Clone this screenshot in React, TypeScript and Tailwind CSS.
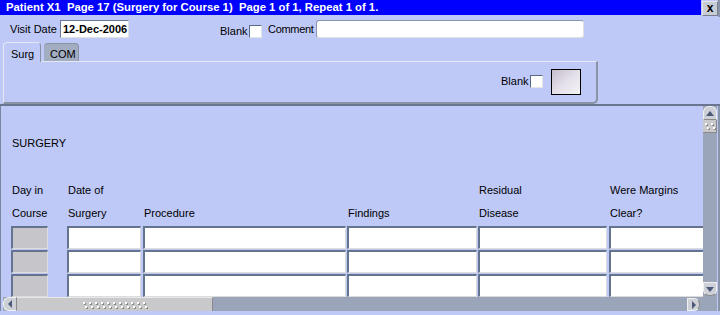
import React from 'react';

const COLS = [
  { w: 'w-[56px]', cell: 'w-[37px]', h1: 'Day in', h2: 'Course', gray: true },
  { w: 'w-[76px]', cell: 'w-[74px]', h1: 'Date of', h2: 'Surgery' },
  { w: 'w-[204px]', cell: 'w-[203px]', h1: '', h2: 'Procedure' },
  { w: 'w-[131px]', cell: 'w-[130px]', h1: '', h2: 'Findings' },
  { w: 'w-[131px]', cell: 'w-[129px]', h1: 'Residual', h2: 'Disease' },
  { w: 'w-[100px]', cell: 'w-[100px]', h1: 'Were Margins', h2: 'Clear?' },
];

function Check() {
  return <div className="w-[13px] h-[13px] bg-white border-t border-l border-[#5a6a82] border-r border-b border-r-[#e4e4e4] border-b-[#e4e4e4]" />;
}

function Dots({ cols, rows }: { cols: number; rows: number }) {
  return (
    <div className="flex flex-col gap-[2px]">
      {Array.from({ length: rows }).map((_, r) => (
        <div key={r} className={`flex gap-[4px] ${r % 2 ? 'pl-[2px]' : ''}`}>
          {Array.from({ length: cols }).map((_, c) => (
            <div key={c} className="w-[2px] h-[2px] bg-white shadow-[1px_1px_0_#8a8a8a]" />
          ))}
        </div>
      ))}
    </div>
  );
}

export default function App() {
  return (
    <div className="w-[720px] h-[315px] bg-[#bec9f7] font-['Liberation_Sans',Arial,sans-serif] text-[11px] text-black flex flex-col overflow-hidden">
      {/* Title bar */}
      <div className="h-[17px] flex">
        <div className="flex-1 bg-[#0000ff] h-[15px] text-white font-bold text-[11.3px] pl-[6px] leading-[15px] whitespace-pre">
          Patient X1  Page 17 (Surgery for Course 1)  Page 1 of 1, Repeat 1 of 1.
        </div>
        <div className="w-[16px] h-[15px] mt-[1px] ml-[1px] bg-[#c8ccd4] border border-[#e8e8e8] border-r-[#7a8090] border-b-[#7a8090] flex items-center justify-center font-bold text-[12px] leading-none pb-[2px]">
          x
        </div>
        <div className="w-[2px] bg-[#8a94a8]" />
      </div>

      {/* Top form */}
      <div className="h-[87px] flex flex-col pr-[3px]">
        <div className="flex items-center h-[18px] mt-[3px] whitespace-nowrap">
          <span className="ml-[10px] w-[50px]">Visit Date</span>
          <div className="w-[69px] h-[18px] bg-white border-t border-l border-[#6a7a92] border-r border-b border-r-[#e0e0e0] border-b-[#e0e0e0] font-bold pl-[2px] leading-[16px]">
            12-Dec-2006
          </div>
          <span className="ml-[91px] w-[29px] mt-[4px]">Blank</span>
          <div className="mt-[4px]"><Check /></div>
          <span className="ml-[6px] w-[48px] tracking-[-0.3px]">Comment</span>
          <div className="w-[268px] h-[18px] bg-white rounded-[3px] border border-[#8a96ac] border-r-[#e0e0e0] border-b-[#e0e0e0]" />
        </div>
        <div className="flex items-end h-[22px] ml-[3px] mt-[1px]">
          <div className="w-[38px] h-[20px] rounded-t-[4px] border-t border-l border-r border-[#e6e8f0] border-r-[#8890a4] pl-[7px] pt-[3px] relative z-10 bg-[#bec9f7] -mb-[1px]">
            Surg
          </div>
          <div className="w-[35px] h-[18px] ml-[3px] rounded-t-[4px] bg-[#a3adc2] border-t border-r border-[#8a92a6] pl-[6px] pt-[2px]">
            COM
          </div>
        </div>
        <div className="ml-[3px] w-[595px] h-[43px] border-t border-l border-[#e6e8f0] border-r-2 border-b-2 border-r-[#8a92a6] border-b-[#8a92a6] rounded-br-[5px] flex items-center justify-end pr-[15px]">
          <span className="mt-[-2px] w-[29px]">Blank</span>
          <div className="mt-[-2px]"><Check /></div>
          <div className="ml-[8px] w-[30px] h-[26px] border border-black bg-gradient-to-br from-[#c4bccc] via-[#e4e0ea] to-[#f4f4f4]" />
        </div>
      </div>

      {/* Lower panel */}
      <div className="flex-1 flex flex-col border-t-2 border-[#6a7690] min-h-0">
        <div className="flex flex-1 min-h-0">
          <div className="w-[3px] border-l border-[#7a86a0]" />
          <div className="flex-1 flex flex-col overflow-hidden">
            <div className="flex-1 flex flex-col min-h-0">
              <div className="pl-[9px] pt-[29px] h-[75px]">SURGERY</div>
              <div className="flex pl-[8px] h-[24px] items-center">
                {COLS.map((c, i) => (
                  <div key={i} className={`${c.w} shrink-0 pl-[1px] whitespace-nowrap`}>{c.h1}</div>
                ))}
              </div>
              <div className="flex pl-[8px] h-[24px] items-center">
                {COLS.map((c, i) => (
                  <div key={i} className={`${c.w} shrink-0 pl-[1px] whitespace-nowrap`}>{c.h2}</div>
                ))}
              </div>
              <div className="flex flex-col gap-[1px] pt-[1px]">
                {[0, 1, 2].map(r => (
                  <div key={r} className="flex pl-[8px] h-[23px]">
                    {COLS.map((c, i) => (
                      <div key={i} className={`${c.w} shrink-0`}>
                        <div className={`${c.cell} h-[23px] border-t-2 border-l-2 border-[#64748e] border-r border-b border-r-[#dcdcdc] border-b-[#dcdcdc] ${c.gray ? 'bg-[#c6c6ca]' : 'bg-white'}`} />
                      </div>
                    ))}
                  </div>
                ))}
              </div>
            </div>
            {/* Horizontal scrollbar */}
            <div className="h-[14px] flex bg-[#9aa5ba] shrink-0">
              <div className="w-[14px] h-[14px] bg-[#cdd0d6] rounded-l-[6px] border border-[#f0f0f0] border-r-[#8a8a8a] flex items-center justify-center">
                <div className="w-0 h-0 border-y-[4px] border-y-transparent border-r-[4px] border-r-[#4a5a78]" />
              </div>
              <div className="w-[196px] h-[14px] bg-[#c9c9cb] border-t border-[#e8e8e8] border-r border-r-[#8a8a8a] flex items-center justify-center">
                <Dots cols={11} rows={2} />
              </div>
              <div className="flex-1" />
              <div className="w-[13px] h-[13px] mt-[1px] mr-[3px] bg-[#cdd0d6] rounded-r-[6px] border border-[#f0f0f0] border-r-[#8a8a8a] flex items-center justify-center">
                <div className="w-0 h-0 border-y-[4px] border-y-transparent border-l-[4px] border-l-[#4a5a78]" />
              </div>
            </div>
          </div>
          {/* Vertical scrollbar */}
          <div className="w-[14px] bg-[#9aa5ba] flex flex-col">
            <div className="h-[14px] bg-[#cdd0d6] rounded-t-[6px] border border-[#f0f0f0] border-b-[#8a8a8a] flex items-center justify-center">
              <div className="w-0 h-0 border-x-[4px] border-x-transparent border-b-[5px] border-b-[#4a5a78]" />
            </div>
            <div className="h-[13px] bg-[#c9c9cb] border-b border-r border-[#8a8a8a] flex items-center justify-center">
              <Dots cols={2} rows={2} />
            </div>
            <div className="flex-1" />
            <div className="h-[14px] bg-[#cdd0d6] rounded-b-[6px] border border-[#f0f0f0] border-b-[#8a8a8a] flex items-center justify-center">
              <div className="w-0 h-0 border-x-[4px] border-x-transparent border-t-[5px] border-t-[#4a5a78]" />
            </div>
            <div className="h-[15px]" />
          </div>
          <div className="w-[3px] border-r-2 border-[#8a94a8]" />
        </div>
        <div className="h-[4px] shrink-0" />
      </div>
    </div>
  );
}
